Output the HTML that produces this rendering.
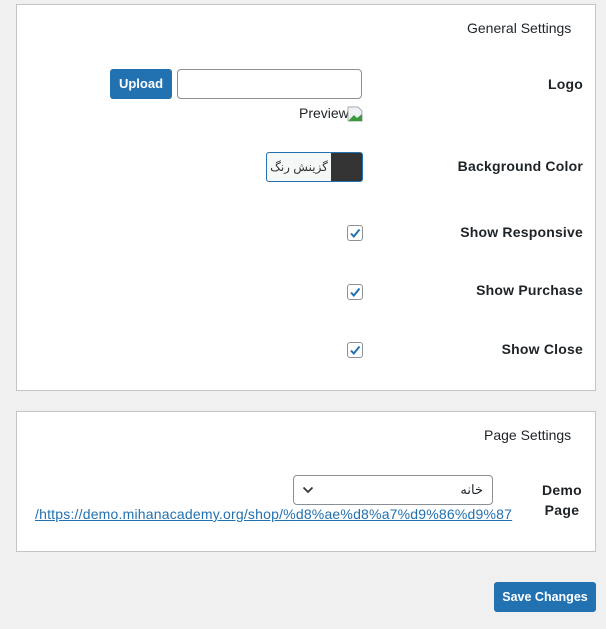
<!DOCTYPE html>
<html><head><meta charset="utf-8"><style>
body{margin:0;width:606px;height:629px;background:#f0f0f1;font-family:"Liberation Sans","Noto Sans CJK SC",sans-serif;color:#1d2327;position:relative;overflow:hidden}
.p{position:absolute;left:16px;width:578px;background:#fff;border:1px solid #c3c4c7}
.a{position:absolute}
.lb{position:absolute;right:23px;font-weight:bold;font-size:14px;text-align:right;letter-spacing:0.2px}
.cb{position:absolute;left:347px;width:14px;height:14px;border:1px solid #8c8f94;border-radius:3px;background:#fff}
.cb svg{position:absolute;left:0;top:0}
.btn{position:absolute;background:#2271b1;color:#fff;font-weight:bold;font-size:13px;border-radius:3px;text-align:center}
</style></head><body>
<div class="p" style="top:4px;height:385px"></div>
<div class="a" style="left:467px;top:20px;font-size:14px">General Settings</div>
<div class="lb" style="top:76px">Logo</div>
<div class="btn" style="left:110px;top:69px;width:62px;height:30px;line-height:30px">Upload</div>
<div class="a" style="left:177px;top:69px;width:183px;height:28px;border:1px solid #8c8f94;border-radius:4px;background:#fff"></div>
<div class="a" style="left:299px;top:105px;font-size:14px">Preview</div>
<svg class="a" style="left:347px;top:106px" width="16" height="16"><path d="M1 1h10l4 4v10H1z" fill="#eef2f6" stroke="#aaa"/><path d="M2 14l5-5 3 3 5-4v7H2z" fill="#3a9a3a"/></svg>
<div class="lb" style="top:158px">Background Color</div>
<div class="a" style="left:266px;top:152px;width:95px;height:28px;border:1px solid #2271b1;border-radius:3px;background:#333;overflow:hidden">
<div style="width:64px;height:28px;background:#f6f7f7;font-size:12px;line-height:28px;text-align:center;color:#333">گزینش رنگ</div></div>
<div class="lb" style="top:224px">Show Responsive</div>
<div class="lb" style="top:282px">Show Purchase</div>
<div class="lb" style="top:341px">Show Close</div>
<div class="cb" style="top:225px"><svg width="14" height="14"><path d="M3 7.5l2.8 3L11.5 3.5" stroke="#2271b1" stroke-width="2" fill="none"/></svg></div>
<div class="cb" style="top:284px"><svg width="14" height="14"><path d="M3 7.5l2.8 3L11.5 3.5" stroke="#2271b1" stroke-width="2" fill="none"/></svg></div>
<div class="cb" style="top:342px"><svg width="14" height="14"><path d="M3 7.5l2.8 3L11.5 3.5" stroke="#2271b1" stroke-width="2" fill="none"/></svg></div>
<div class="p" style="top:411px;height:139px"></div>
<div class="a" style="left:484px;top:427px;font-size:14px">Page Settings</div>
<div class="lb" style="top:480px;line-height:20px;text-align:center;right:19px;width:50px;letter-spacing:0.3px">Demo<br>Page</div>
<div class="a" style="left:293px;top:475px;width:198px;height:28px;border:1px solid #8c8f94;border-radius:4px;background:#fff">
<svg class="a" style="left:8px;top:9px" width="12" height="10"><path d="M1.5 2.5l4.5 4.5 4.5-4.5" stroke="#333" stroke-width="1.7" fill="none"/></svg>
<div class="a" style="right:9px;top:6px;font-size:13px">خانه</div></div>
<div class="a" style="left:35px;top:506px;font-size:14px;letter-spacing:0.2px;color:#2271b1;text-decoration:underline">/https://demo.mihanacademy.org/shop/%d8%ae%d8%a7%d9%86%d9%87</div>
<div class="btn" style="left:494px;top:582px;width:102px;height:30px;line-height:31px;font-size:12.5px">Save Changes</div>
</body></html>
